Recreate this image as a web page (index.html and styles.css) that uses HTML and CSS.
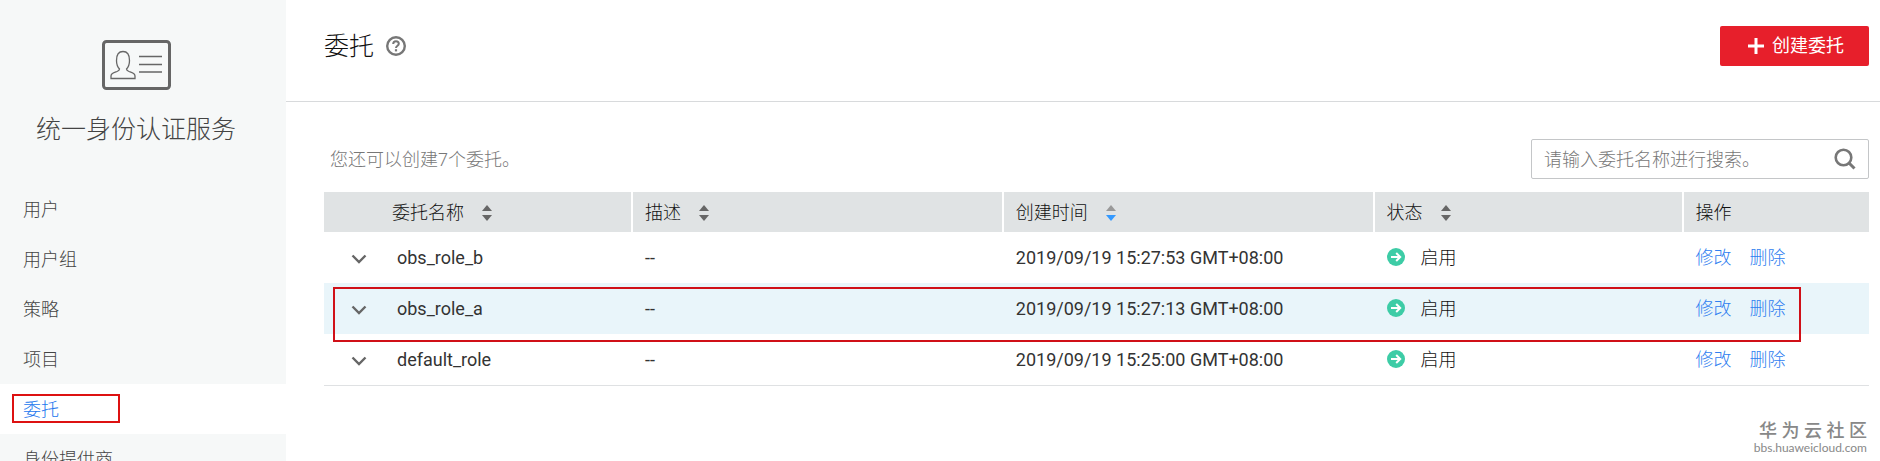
FILE: index.html
```html
<!DOCTYPE html>
<html lang="zh-CN">
<head>
  <meta charset="UTF-8" />
  <meta name="viewport" content="width=device-width, initial-scale=1.0"/>
  <title>统一身份认证服务</title>
  <link rel="stylesheet" href="styles.css">
</head>
<body>
  <svg class="sprite" width="0" height="0" aria-hidden="true">
    <symbol id="chevron" viewBox="0 0 16 10"><path d="M1.500 1.500 8 8l6.500-6.500" fill="none" stroke="currentColor" stroke-width="2.400"/></symbol>
    <symbol id="enabled" viewBox="0 0 18 18">
      <circle cx="9" cy="9" r="9" fill="#3dcca6"/>
      <path d="M4 9h9M9.200 5l4 4-4 4" fill="none" stroke="#fff" stroke-width="2"/>
    </symbol>
    <symbol id="sort" viewBox="0 0 10 16">
      <path d="M5 0l5 6H0z"/>
      <path d="M5 16l5-6H0z"/>
    </symbol>
  </svg>
  <div class="layout">
    <aside class="sidebar">
      <svg class="service-icon" width="70" height="50" viewBox="0 0 70 50" fill="none" stroke="#666">
        <rect x="1.500" y="1.500" width="66" height="47" rx="3" stroke-width="3"/>
        <path d="M9 38.500v-2.500c0-3 3-3.500 6-4.500 2-.7 2.500-1 2.500-2.500-2-2-3-4.500-3-8.500 0-5.500 2-9 6.500-9s6.500 3.500 6.500 9c0 4-1 6.500-3 8.500 0 1.500.5 1.800 2.500 2.500 3 1 6 1.500 6 4.500v2.500z" stroke-width="1.300"/>
        <path d="M37 16.500h23M37 24.500h23M37 32h23" stroke-width="1.300"/>
      </svg>
      <h2 class="service-name">统一身份认证服务</h2>
      <nav class="menu">
        <a href="#">用户</a>
        <a href="#">用户组</a>
        <a href="#">策略</a>
        <a href="#">项目</a>
        <a href="#" class="active">委托</a>
        <a href="#">身份提供商</a>
      </nav>
    </aside>
    <main class="main">
      <header class="page-header">
        <h1>委托</h1>
        <svg class="help" width="20" height="20" viewBox="0 0 20 20" fill="none" stroke="#777">
          <circle cx="10" cy="10" r="8.800" stroke-width="2.400"/>
          <path d="M7.200 8c0-1.700 1.100-2.800 2.800-2.800s2.800 1 2.800 2.500c0 2-2.800 2-2.800 4.300" stroke-width="2"/>
          <path d="M10 13.200v2.200" stroke-width="2.200"/>
        </svg>
        <button class="create-btn" type="button">
          <svg width="16" height="16" viewBox="0 0 16 16"><path d="M8 0v16M0 8h16" stroke="#fff" stroke-width="3"/></svg>
          创建委托
        </button>
      </header>
      <section class="content">
        <div class="toolbar">
          <p class="quota">您还可以创建7个委托。</p>
          <form class="search">
            <input type="text" placeholder="请输入委托名称进行搜索。" aria-label="请输入委托名称进行搜索。">
            <button type="button" aria-label="搜索">
              <svg width="22" height="22" viewBox="0 0 22 22" fill="none" stroke="#777">
                <circle cx="9.500" cy="9.500" r="7.800" stroke-width="2.600"/>
                <path d="M15 15l5.500 5.500" stroke-width="3"/>
              </svg>
            </button>
          </form>
        </div>
        <div class="table-wrap">
          <table>
            <thead>
              <tr>
                <th class="name">委托名称<svg class="sort"><use href="#sort"/></svg></th>
                <th class="desc">描述<svg class="sort"><use href="#sort"/></svg></th>
                <th class="time">创建时间<svg class="sort" viewBox="0 0 10 16"><path d="M5 0l5 6H0z" fill="#999"/><path d="M5 16l5-6H0z" fill="#3399ff"/></svg></th>
                <th class="status">状态<svg class="sort"><use href="#sort"/></svg></th>
                <th class="actions">操作</th>
              </tr>
            </thead>
            <tbody>
              <tr>
                <td class="name"><button class="expand" type="button" aria-label="展开"><svg width="16" height="10"><use href="#chevron"/></svg></button>obs_role_b</td>
                <td>--</td>
                <td>2019/09/19 15:27:53 GMT+08:00</td>
                <td class="status"><svg class="state" width="18" height="18"><use href="#enabled"/></svg>启用</td>
                <td><a href="#">修改</a><a href="#">删除</a></td>
              </tr>
              <tr class="hover">
                <td class="name"><button class="expand" type="button" aria-label="展开"><svg width="16" height="10"><use href="#chevron"/></svg></button>obs_role_a</td>
                <td>--</td>
                <td>2019/09/19 15:27:13 GMT+08:00</td>
                <td class="status"><svg class="state" width="18" height="18"><use href="#enabled"/></svg>启用</td>
                <td><a href="#">修改</a><a href="#">删除</a></td>
              </tr>
              <tr>
                <td class="name"><button class="expand" type="button" aria-label="展开"><svg width="16" height="10"><use href="#chevron"/></svg></button>default_role</td>
                <td>--</td>
                <td>2019/09/19 15:25:00 GMT+08:00</td>
                <td class="status"><svg class="state" width="18" height="18"><use href="#enabled"/></svg>启用</td>
                <td><a href="#">修改</a><a href="#">删除</a></td>
              </tr>
            </tbody>
          </table>
          <div class="row-mark"></div>
        </div>
      </section>
      <footer class="watermark">
        <strong>华 为 云 社 区</strong>
        <span>bbs.huaweicloud.com</span>
      </footer>
    </main>
  </div>
</body>
</html>
```
FILE: styles.css
```css
*, *::after { box-sizing: border-box; }
body {
  margin: 0;
  background: #fff;
  color: #333;
  font-family: Roboto, "Noto Sans CJK SC", sans-serif;
  font-size: 18px;
  line-height: 24px;
}
a {
  color: #3080f0;
  text-decoration: none;
}
button {
  font: inherit;
  border: none;
  cursor: pointer;
}
.sprite { position: absolute; }
.layout {
  display: flex;
  height: 100vh;
  overflow: hidden;
}

.sidebar {
  flex: 0 0 286px;
  background: #f6f8f8;
}
.service-icon {
  display: block;
  margin: 40px 0 0 102px;
}
.service-name {
  margin: 21px 0 35px 36px;
  color: #444;
  font-size: 25px;
  font-weight: 300;
  line-height: 38px;
}
.menu a {
  display: block;
  position: relative;
  height: 50px;
  padding-left: 23px;
  color: #444;
  font-weight: 300;
  line-height: 52px;
}
.menu a.active {
  background: #fff;
  color: #2277ee;
}
.menu a.active::after {
  content: "";
  position: absolute;
  top: 10px;
  left: 12px;
  width: 108px;
  height: 29px;
  border: 2px solid #dd1111;
}

.main {
  flex: 1;
  display: flex;
  flex-direction: column;
  min-width: 0;
}
.page-header {
  display: flex;
  align-items: center;
  height: 102px;
  padding: 0 11px 10px 38px;
  border-bottom: 1px solid #d8dadc;
}
.page-header h1 {
  margin: 0;
  padding-top: 2px;
  font-size: 25px;
  font-weight: 300;
  line-height: 38px;
  color: #111;
}
.help { margin-left: 12px; }
.create-btn {
  display: flex;
  align-items: center;
  gap: 8px;
  height: 40px;
  margin-left: auto;
  padding: 0 25px 0 28px;
  background: #e71f2b;
  border-radius: 2px;
  color: #fff;
}

.content { padding: 37px 11px 0 38px; }
.toolbar {
  display: flex;
  align-items: center;
  justify-content: space-between;
  margin-bottom: 13px;
}
.quota {
  margin: 0 0 0 6px;
  padding-top: 2px;
  color: #777;
  font-weight: 300;
}
.search {
  display: flex;
  align-items: center;
  width: 338px;
  height: 40px;
  border: 1px solid #c4c6c8;
  border-radius: 2px;
}
.search input {
  flex: 1;
  min-width: 0;
  padding: 2px 0 0 12px;
  border: none;
  outline: none;
  font: inherit;
  font-weight: 300;
}
.search input::placeholder { color: #777; }
.search button {
  display: flex;
  padding: 0 12px;
  background: none;
}

.table-wrap { position: relative; }
table {
  width: 100%;
  table-layout: fixed;
  border-collapse: separate;
  border-spacing: 0;
  border-bottom: 1px solid #dfe1e3;
}
th, td {
  padding: 0 0 0 12px;
  text-align: left;
  vertical-align: middle;
  white-space: nowrap;
}
th {
  height: 40px;
  padding-top: 2px;
  background: #e0e3e4;
  border-right: 2px solid #fff;
  color: #111;
  font-weight: 300;
}
th:last-child { border-right: none; }
th.name {
  width: 20%;
  padding-left: 68px;
}
th.desc, th.time { width: 24%; }
th.status { width: 20%; }
th.actions { width: 12%; }
.sort {
  width: 10px;
  height: 16px;
  margin-left: 18px;
  vertical-align: -2px;
  fill: #666;
}
td { height: 51px; }
td.name { padding-left: 26px; }
td.status {
  color: #111;
  font-weight: 300;
}
tr.hover td { background: #e9f5fa; }
td a { font-weight: 300; }
td a + a { margin-left: 18px; }
.expand {
  width: 17px;
  margin-right: 30px;
  padding: 0;
  background: none;
  color: #666;
}
.expand svg { vertical-align: middle; }
.state {
  margin-right: 16px;
  vertical-align: -2px;
}
.row-mark {
  position: absolute;
  top: 95px;
  left: 9px;
  right: 68px;
  height: 55px;
  border: 2px solid #d01018;
  pointer-events: none;
}

.watermark {
  display: flex;
  flex-direction: column;
  align-items: flex-end;
  margin-top: auto;
  padding: 0 13px 7px 0;
  color: #888;
}
.watermark strong {
  font-weight: 500;
  line-height: 20px;
}
.watermark span {
  font-family: Lato, sans-serif;
  font-size: 12px;
  line-height: 13px;
}
```
